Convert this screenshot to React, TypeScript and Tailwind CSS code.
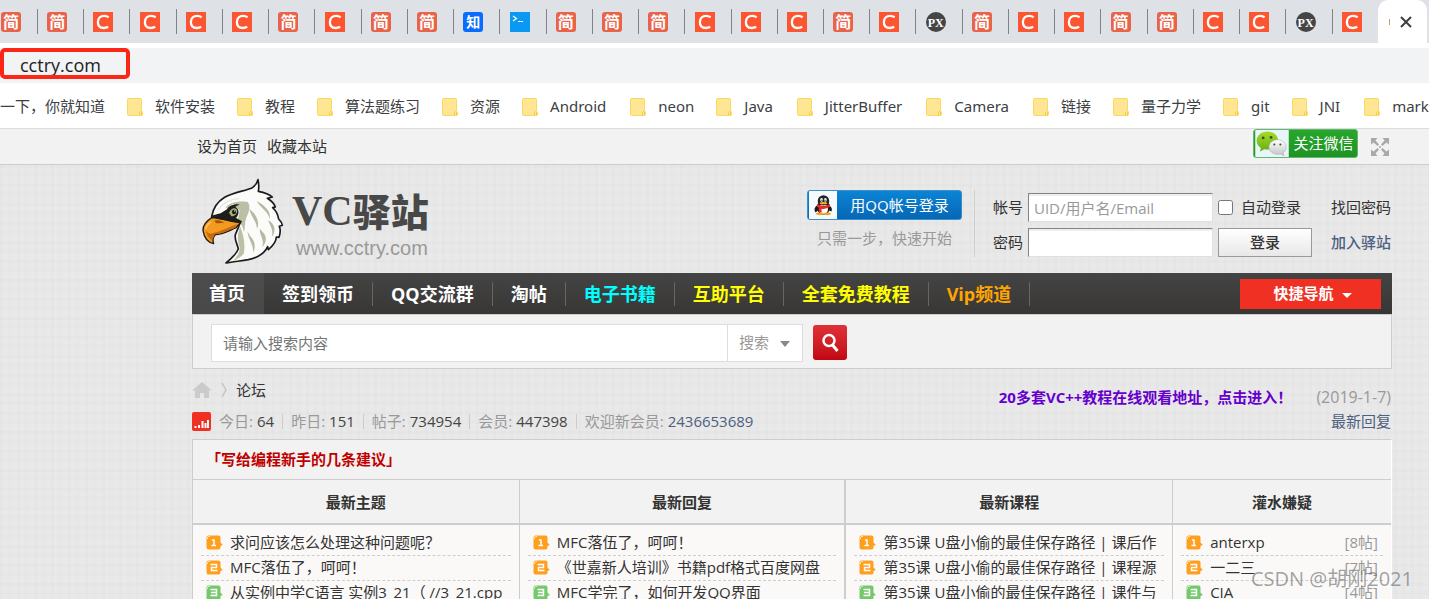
import { useState } from 'react';

const TABS = [
  'jian', 'jian', 'c', 'c', 'c', 'c', 'jian', 'c', 'jian', 'jian',
  'zhi', 'code', 'jian', 'jian', 'jian', 'c', 'c', 'c', 'jian', 'c',
  'px', 'jian', 'c', 'c', 'jian', 'jian', 'c', 'c', 'px', 'c',
];

const BOOKMARKS = [
  '软件安装', '教程', '算法题练习', '资源', 'Android', 'neon', 'Java',
  'JitterBuffer', 'Camera', '链接', '量子力学', 'git', 'JNI', 'mark',
];

const NAV = [
  { label: '签到领币', color: 'text-white' },
  { label: 'QQ交流群', color: 'text-white' },
  { label: '淘帖', color: 'text-white' },
  { label: '电子书籍', color: 'text-[#00ffff]' },
  { label: '互助平台', color: 'text-[#ffff00]' },
  { label: '全套免费教程', color: 'text-[#ffff00]' },
  { label: 'Vip频道', color: 'text-[#ffa500]' },
];

const STATS = [
  { label: '今日', value: '64' },
  { label: '昨日', value: '151' },
  { label: '帖子', value: '734954' },
  { label: '会员', value: '447398' },
];

const COLUMNS = [
  {
    title: '最新主题',
    border: 'border-r',
    rows: [
      { text: '求问应该怎么处理这种问题呢？' },
      { text: 'MFC落伍了，呵呵！' },
      { text: '从实例中学C语言 实例3_21（ //3_21.cpp' },
    ],
  },
  {
    title: '最新回复',
    border: 'border-r-2',
    rows: [
      { text: 'MFC落伍了，呵呵！' },
      { text: '《世嘉新人培训》书籍pdf格式百度网盘' },
      { text: 'MFC学完了，如何开发QQ界面' },
    ],
  },
  {
    title: '最新课程',
    border: 'border-r',
    rows: [
      { text: '第35课 U盘小偷的最佳保存路径 | 课后作' },
      { text: '第35课 U盘小偷的最佳保存路径 | 课程源' },
      { text: '第35课 U盘小偷的最佳保存路径 | 课件与' },
    ],
  },
  {
    title: '灌水嫌疑',
    border: '',
    rows: [
      { text: 'anterxp', count: '[8帖]' },
      { text: '一二三', count: '[7帖]' },
      { text: 'CIA', count: '[4帖]' },
    ],
  },
];

function Favicon({ kind }: { kind: string }) {
  if (kind === 'jian') {
    return (
      <span className="flex size-5 shrink-0 items-center justify-center rounded-[3px] bg-[#e9634a] text-base leading-5 font-bold text-white">
        简
      </span>
    );
  }
  if (kind === 'zhi') {
    return (
      <span className="flex size-5 shrink-0 items-center justify-center rounded-[3px] bg-[#0a6cff] text-sm leading-5 font-bold text-white">
        知
      </span>
    );
  }
  if (kind === 'code') {
    return (
      <svg viewBox="0 0 20 20" className="size-5 shrink-0" aria-hidden="true">
        <rect width="20" height="20" fill="#0a99f2" />
        <path d="M3 4l3.5 2.5L3 9M8 9.5h5" fill="none" stroke="#fff" strokeWidth="1.2" />
      </svg>
    );
  }
  if (kind === 'px') {
    return (
      <span className="flex size-5 shrink-0 items-center justify-center rounded-full bg-[#454545] pt-0.5 font-['Liberation_Serif',serif] text-[12px] leading-4 font-bold text-white">
        PX
      </span>
    );
  }
  return (
    <svg viewBox="0 0 20 20" className="size-5 shrink-0" aria-hidden="true">
      <rect width="20" height="20" fill="#fc5531" />
      <path
        d="M15.6 5.2C14.3 4.3 12.8 3.9 11.2 3.9 7.3 3.9 4.9 6.5 4.9 10.2c0 3.6 2.3 5.8 5.8 5.8 1.7 0 3.2-.4 4.5-1.2"
        fill="none"
        stroke="#fff"
        strokeWidth="2.3"
      />
    </svg>
  );
}

function FolderIcon() {
  return (
    <svg viewBox="0 0 16 18" className="h-[18px] w-4 shrink-0" aria-hidden="true">
      <path d="M1.5.5h12a1 1 0 0 1 1 1v11l1 1.5v2.5a1 1 0 0 1-1 1h-13a1 1 0 0 1-1-1v-15a1 1 0 0 1 1-1z" fill="#ffe694" stroke="#fbd75b" />
      <path d="M12.5 17.5v-3q1-2 2 0v3" fill="#ffe694" stroke="#f3cb4a" />
    </svg>
  );
}

function EagleLogo() {
  return (
    <svg viewBox="48 156 249 261" className="h-[87px] w-[83px] shrink-0" aria-hidden="true">
      <path
        d="M219 161C222 175 222 186 220 196C236 199 252 204 262 213L247 217C260 225 268 234 271 243L263 245C275 256 279 267 281 279C287 285 291 290 292 298L283 301C287 310 286 322 282 334L274 333C274 346 265 358 250 371L248 362C238 384 213 396 190 401C166 405 145 407 123 411C141 396 155 384 160 368C155 350 148 340 151 326L162 300L80 272C84 248 96 228 119 214C147 198 181 195 202 185C211 179 216 171 219 161Z"
        fill="#fbfbf9"
        stroke="#1b1c1b"
        strokeWidth="5"
        strokeLinejoin="round"
      />
      <path d="M120 248C132 229 158 224 188 228C197 238 193 258 185 272C178 290 181 305 177 318C174 301 166 290 158 282L164 254L145 234Z" fill="#bcbfa5" />
      <path d="M165 300C176 329 181 350 177 382C169 392 156 400 144 405C157 392 165 378 164 363C158 349 156 327 165 300Z" fill="#bcc0a8" />
      <path d="M193 248C198 273 216 286 216 309C222 295 221 283 207 262ZM215 225C228 249 250 255 254 279C258 259 245 247 231 235ZM187 316C191 345 207 356 204 381C213 362 210 344 196 331ZM224 308C224 330 240 342 231 363C246 349 246 330 233 318ZM249 282C257 304 266 311 260 333C273 317 269 299 260 290Z" fill="#b4b9a1" />
      <path d="M78 269L107 262L126 250C131 239 147 234 164 235L151 242C163 250 164 263 153 276L171 286L164 300C141 288 112 284 79 279Z" fill="#1c1f1b" />
      <path d="M132 260C139 246 149 243 156 251C158 263 150 270 139 271Z" fill="#a9ab78" />
      <ellipse cx="147" cy="258" rx="6" ry="7" fill="#171a16" />
      <path d="M148 252l4 3-4 2z" fill="#fff" />
      <path
        d="M80 275C68 283 53 297 54 313C57 333 68 349 86 353C82 342 84 333 91 326C111 326 130 315 152 306L166 290C140 289 116 278 80 275Z"
        fill="#f39b20"
        stroke="#281c12"
        strokeWidth="4"
        strokeLinejoin="round"
      />
      <path d="M85 321C106 316 129 305 157 294L147 307C129 314 110 324 90 325L82 342C74 340 66 328 62 314C69 322 76 325 85 321Z" fill="#c66a12" />
      <path d="M88 284C100 280 112 285 119 292C107 289 99 294 93 291Z" fill="#a75409" />
      <path d="M76 289Q64 298 63 307" fill="none" stroke="#ffc25b" strokeWidth="5" strokeLinecap="round" />
      <path d="M100 251C113 232 137 219 163 217" fill="none" stroke="#e4e5dd" strokeWidth="4" />
    </svg>
  );
}

function WechatIcon() {
  return (
    <svg viewBox="0 0 36 29" className="h-full w-9 shrink-0" aria-hidden="true">
      <defs>
        <linearGradient id="bubble" x2="0" y2="1">
          <stop stopColor="#a6dc2b" />
          <stop offset="1" stopColor="#68ad13" />
        </linearGradient>
        <linearGradient id="pale" x2="0" y2="1">
          <stop stopColor="#fff" />
          <stop offset="1" stopColor="#bfc3c5" />
        </linearGradient>
      </defs>
      <rect width="36" height="29" fill="#e8f5f9" />
      <path d="M13 1.5C6.5 1.5 1.5 6 1.5 11.5c0 3.2 1.7 6 4.5 7.8L5 23l4.8-2.3C16.5 22.2 24.5 18.5 24.5 11c0-5.500-5-9.500-11.500-9.500z" fill="url(#bubble)" />
      <path d="M24 10.5c-5.200 0-9.300 3.300-9.300 7.700s4.100 8 9.300 8c1 0 2-.2 3-.5l4 2-1-3.300c1.900-1.400 3.200-3.600 3.200-6.200 0-4.400-4-7.700-9.200-7.700z" fill="url(#pale)" stroke="#a9b0b2" strokeWidth=".6" />
      <g fill="#3b531d">
        <circle cx="8.5" cy="8.5" r="1.5" />
        <circle cx="17" cy="8" r="1.5" />
        <circle cx="20.5" cy="15.5" r="1.1" />
        <circle cx="27" cy="15.5" r="1.1" />
      </g>
    </svg>
  );
}

function PenguinIcon() {
  return (
    <svg viewBox="0 0 30 30" className="h-full w-[30px] shrink-0" aria-hidden="true">
      <rect width="30" height="30" fill="#f5fafd" />
      <path d="M9 15Q4 19 7 23L12 19zM21 15Q26 18 24 22L18 19z" fill="#17191b" />
      <ellipse cx="15.5" cy="18" rx="7" ry="7.5" fill="#17191b" />
      <ellipse cx="15.5" cy="19.5" rx="4.8" ry="5.5" fill="#fff" />
      <path d="M9.5 13V10a6 5.5 0 0 1 12 0v3q-6 5-12 0z" fill="#222426" />
      <ellipse cx="13.5" cy="9.5" rx="1.5" ry="2" fill="#fff" />
      <ellipse cx="17.5" cy="9.5" rx="1.5" ry="2" fill="#fff" />
      <circle cx="13.9" cy="9.8" r=".7" />
      <circle cx="17.1" cy="9.8" r=".7" />
      <ellipse cx="15.5" cy="13" rx="4" ry="1.3" fill="#f5ad21" />
      <path d="M8.5 14q7 4 14 0v3q-5 3-9 2v4h-3v-5l-2-1z" fill="#e52b24" />
      <ellipse cx="11.5" cy="24.5" rx="4" ry="1.5" fill="#f2a31f" />
      <ellipse cx="19.5" cy="24.5" rx="4" ry="1.5" fill="#f2a31f" />
    </svg>
  );
}

function RankBadge({ rank }: { rank: number }) {
  const color = rank < 3 ? '#ff9f1e' : '#75c96c';
  return (
    <svg viewBox="0 0 17 15" className="h-[15px] w-[17px] shrink-0" aria-hidden="true">
      <path d="M2.5.5h10a2 2 0 0 1 2 2v5l2.3 2.5-2.3 1v1.5a2 2 0 0 1-2 2h-10a2 2 0 0 1-2-2v-10a2 2 0 0 1 2-2z" fill={color} />
      <path d="M1.5 4V2.5a1 1 0 0 1 1-1H4" fill="none" stroke="#fff" strokeOpacity=".7" />
      {rank === 1 && <path d="M6 5h2v5.5M5.5 10.5h4.5" fill="none" stroke="#fff" strokeWidth="1.5" />}
      {rank === 2 && <path d="M4.5 4.5h6v3h-5v3h6" fill="none" stroke="#fff" strokeWidth="1.5" />}
      {rank === 3 && <path d="M4.5 4.5h6v6h-6M5 7.5h5" fill="none" stroke="#fff" strokeWidth="1.5" />}
    </svg>
  );
}

function Browser() {
  return (
    <header className="shrink-0 border-b border-[#dadce0] bg-white text-[#3c4043]">
      <div className="flex h-[43px] bg-[#dee1e6] pl-px">
        <ul className="flex min-w-0 flex-1 items-center">
          {TABS.map((kind, i) => (
            <li
              key={i}
              className="flex min-w-0 flex-1 items-center gap-4 last:w-9 last:flex-none"
            >
              <Favicon kind={kind} />
              {i < TABS.length - 1 && <span className="h-[25px] w-px shrink-0 bg-[#808387]" />}
            </li>
          ))}
        </ul>
        <div className="flex w-[49px] items-center justify-end rounded-t-[10px] bg-white pr-[15px]">
          <span className="mr-2.5 h-1.5 w-px bg-[#d79a5c]" />
          <button type="button" aria-label="关闭标签页">
            <svg viewBox="0 0 12 12" className="size-3" aria-hidden="true">
              <path d="M1 1l10 10M11 1L1 11" stroke="#3c4043" strokeWidth="2" />
            </svg>
          </button>
        </div>
        <div className="w-0.5" />
      </div>
      <div className="mt-[5px] h-[35px] bg-[#f1f3f4]">
        <input
          type="text"
          aria-label="地址"
          defaultValue="cctry.com"
          className="block h-[31px] w-[130px] rounded-[5px] border-4 border-[#fb2616] px-4 pt-0.5 text-[18px] text-[#202124] outline-none"
        />
      </div>
      <nav className="flex h-[45px] items-center gap-[22px] overflow-hidden pt-0.5 font-['Noto_Sans','Noto_Sans_CJK_SC',sans-serif] text-[15px] whitespace-nowrap">
        <a href="#home">一下，你就知道</a>
        {BOOKMARKS.map((name) => (
          <a
            key={name}
            href="#bookmark"
            className={`flex shrink-0 items-center gap-3 ${/^[A-Z]/.test(name) ? 'pr-0.5' : ''}`}
          >
            <FolderIcon />
            {name}
          </a>
        ))}
      </nav>
    </header>
  );
}

function LoginForm() {
  const [account, setAccount] = useState('');
  const [password, setPassword] = useState('');
  const field =
    'h-[29px] w-[185px] border border-t-[#848484] border-r-[#e0e0e0] border-b-[#e0e0e0] border-l-[#848484] bg-white px-[5px] shadow-[inset_0_2px_0_#eeeeee] outline-none placeholder:text-[#999]';

  return (
    <div className="flex pt-[25px] pr-px">
      <div className="flex w-[155px] flex-col items-center">
        <button
          type="button"
          className="flex h-[30px] w-full overflow-hidden rounded-[3px] border border-[#3d8fc9] bg-linear-to-b from-[#0b84d4] to-[#0667b5] text-white"
        >
          <PenguinIcon />
          <span className="flex-1 text-center leading-7">用QQ帐号登录</span>
        </button>
        <p className="mt-[7px] leading-[22px] text-[#999]">只需一步，快速开始</p>
      </div>
      <form
        className="ml-3 grid h-[67px] grid-cols-[35px_185px_94px_auto] items-center gap-y-1.5 border-l border-[#cdcdcd] pt-[3px] pl-[18px]"
        onSubmit={(e) => e.preventDefault()}
      >
        <label htmlFor="account">帐号</label>
        <input
          id="account"
          type="text"
          placeholder="UID/用户名/Email"
          value={account}
          onChange={(e) => setAccount(e.target.value)}
          className={field}
        />
        <label className="ml-[5px] flex items-center gap-2 whitespace-nowrap">
          <input type="checkbox" className="size-[15px]" />
          自动登录
        </label>
        <a href="#lost" className="ml-6">找回密码</a>
        <label htmlFor="password">密码</label>
        <input
          id="password"
          type="password"
          value={password}
          onChange={(e) => setPassword(e.target.value)}
          className={field}
        />
        <button
          type="submit"
          className="ml-[5px] h-[29px] w-[94px] border border-[#999] bg-linear-to-b from-white to-[#e8e8e8] font-medium"
        >
          登录
        </button>
        <a href="#join" className="ml-6 font-medium text-[#4d6080]">加入驿站</a>
      </form>
    </div>
  );
}

function SearchBar() {
  return (
    <form
      className="flex h-[55px] items-center border border-[#cdcdcd] bg-[#f2f2f2] px-[18px] pt-0.5"
      onSubmit={(e) => e.preventDefault()}
    >
      <input
        type="search"
        aria-label="搜索内容"
        placeholder="请输入搜索内容"
        className="h-[38px] w-[517px] border border-[#ddd] bg-white px-[11px] outline-none placeholder:text-[#757575]"
      />
      <div className="relative">
        <select
          aria-label="搜索范围"
          className="h-[38px] w-[75px] appearance-none border border-l-0 border-[#ddd] bg-white pl-[11px] text-[#999]"
        >
          <option>搜索</option>
        </select>
        <svg viewBox="0 0 10 6" className="pointer-events-none absolute top-[17px] right-[13px] h-1.5 w-2.5" aria-hidden="true">
          <path d="M0 0h10L5 6z" fill="#888" />
        </svg>
      </div>
      <button
        type="submit"
        aria-label="搜索"
        className="ml-2.5 flex h-[35px] w-[34px] items-center justify-center rounded-[3px] bg-linear-to-b from-[#e03038] to-[#c20413]"
      >
        <svg viewBox="0 0 18 20" className="h-5 w-[18px]" aria-hidden="true">
          <circle cx="8" cy="7.5" r="5.5" fill="none" stroke="#fff" strokeWidth="2.5" />
          <path d="M11.5 12l5 6" stroke="#fff" strokeWidth="3" />
        </svg>
      </button>
    </form>
  );
}

function InfoBar() {
  return (
    <div className="flex h-[70px] justify-between">
      <div className="pt-2.5">
        <div className="flex h-[22px] items-center">
          <svg viewBox="0 0 20 16" className="h-4 w-5" aria-hidden="true">
            <path d="M10 0l10 8.5h-3V16h-5v-5H8v5H3V8.5H0z" fill="#cbcbcb" />
          </svg>
          <svg viewBox="0 0 8 14" className="mx-2 h-3.5 w-2" aria-hidden="true">
            <path d="M2 0l4 7-4 7" fill="none" stroke="#c4c4c4" strokeWidth="1.5" />
          </svg>
          <a href="#forum">论坛</a>
        </div>
        <div className="mt-[9px] flex h-[22px] items-center">
          <svg viewBox="0 0 19 19" className="mr-2 size-[19px]" aria-hidden="true">
            <rect width="19" height="19" rx="2" fill="#f03023" />
            <path d="M3.5 16v-2M7 16v-3M10.5 16V9M13.5 16v-5M16 16V8" stroke="#fff" strokeWidth="2" />
          </svg>
          {STATS.map((s) => (
            <span key={s.label} className="flex items-center text-[#999]">
              {s.label}:<em className="ml-1 text-[#444] not-italic">{s.value}</em>
              <span className="mr-2 ml-2 h-[15px] w-px bg-[#ccc]" />
            </span>
          ))}
          <span className="text-[#999]">欢迎新会员:</span>
          <a href="#member" className="ml-1 text-[#4d6080]">2436653689</a>
        </div>
      </div>
      <div className="flex flex-col items-end pt-4 pr-px leading-6">
        <p className="flex">
          <a href="#vc" className="font-bold text-[#6600cc]">20多套VC++教程在线观看地址，点击进入！</a>
          <span className="ml-6 text-base text-[#999]">(2019-1-7)</span>
        </p>
        <a href="#latest" className="text-[#4d6080]">最新回复</a>
      </div>
    </div>
  );
}

function Forum() {
  return (
    <section className="border border-[#cdcdcd] border-r-white bg-[#f2f2f2]">
      <h2 className="h-10 border-b border-[#cdcdcd] pl-[13px] leading-[39px] font-bold text-[#c00000]">
        「写给编程新手的几条建议」
      </h2>
      <div className="grid grid-cols-[3fr_3fr_3fr_2fr]">
        {COLUMNS.map((col) => (
          <section key={col.title} className={`min-w-0 border-[#cdcdcd] ${col.border}`}>
            <h3 className="h-[45px] border-b-2 border-[#cdcdcd] text-center leading-[44px] font-bold">
              {col.title}
            </h3>
            <ol className="bg-[#faf9f8] px-2 pt-1.5 pb-3">
              {col.rows.map((row, i) => (
                <li
                  key={row.text}
                  className="flex h-[25px] items-center border-b border-dashed border-[#cdcdcd] pr-[5px] pb-0.5 pl-[5px]"
                >
                  <RankBadge rank={i + 1} />
                  <a href="#thread" className="ml-[7px] min-w-0 flex-1 overflow-hidden whitespace-nowrap">
                    {row.text}
                  </a>
                  {row.count && <span className="text-[#999]">{row.count}</span>}
                </li>
              ))}
            </ol>
          </section>
        ))}
      </div>
    </section>
  );
}

function App() {
  return (
    <div className="relative flex h-screen flex-col overflow-hidden bg-[#e9e9e9] font-['Open_Sans','Noto_Sans_CJK_SC',sans-serif] text-[15px] text-[#333]">
      <Browser />
      <div className="flex h-9 shrink-0 justify-between border-b border-[#cdcdcd] bg-[#f2f2f2] pr-[39px] pl-[197px]">
        <div className="flex items-center gap-2.5">
          <a href="#sethome">设为首页</a>
          <a href="#favorite">收藏本站</a>
        </div>
        <div className="flex items-start gap-3">
          <button
            type="button"
            className="flex h-[29px] w-[105px] overflow-hidden rounded-[3px] border border-[#63b76e] bg-linear-to-b from-[#28a72c] to-[#1e9325] text-white"
          >
            <WechatIcon />
            <span className="flex-1 text-center leading-[27px]">关注微信</span>
          </button>
          <button type="button" aria-label="切换到宽版" className="mt-2">
            <svg viewBox="0 0 20 20" className="size-5" aria-hidden="true">
              <path d="M1 1h6.500L5.500 3.500 9 7.500 7.500 9 3.500 5.500 1 7.500zM19 1v6.500L16.500 5.500 12.500 9 11 7.500l3.500-4L12.500 1zM1 19v-6.500L3.500 14.500 7.500 11 9 12.500l-3.500 4L7.500 19zM19 19h-6.500l2-2.500-3.500-4 1.500-1.500 4 3.500 2.500-2z" fill="#a9a9a9" />
              <circle cx="10" cy="10" r="1" fill="#a9a9a9" />
            </svg>
          </button>
        </div>
      </div>

      <div className="flex-1 bg-[repeating-linear-gradient(90deg,#00000003_0_3px,transparent_3px_7px,#00000002_7px_12px,transparent_12px_17px),repeating-linear-gradient(#00000003_0_3px,transparent_3px_8px,#00000002_8px_12px,transparent_12px_19px)] pr-[37px] pl-48">
        <div className="flex h-[108px] justify-between">
          <a href="#logo" className="flex pt-[13px] pl-[9px]">
            <EagleLogo />
            <span className="ml-2 flex flex-col pt-3">
              <span className="flex items-center text-[38px] leading-[42px] font-black text-[#484848]">
                <span className="font-['Liberation_Serif',serif] text-[42px]">VC</span>驿站
              </span>
              <span className="ml-1 font-['Liberation_Sans',sans-serif] text-[20px] leading-8 text-[#999]">
                www.cctry.com
              </span>
            </span>
          </a>
          <LoginForm />
        </div>

        <nav className="flex h-[41px] items-center bg-linear-to-b from-[#444] to-[#383735] pr-[11px] text-[18px] font-bold">
          <a href="#index" className="h-full w-[72px] bg-linear-to-b from-[#4d4d4d] to-[#484848] pr-0.5 text-center leading-[41px] text-white">
            首页
          </a>
          {NAV.map((item) => (
            <a
              key={item.label}
              href="#nav"
              className={`border-r border-[#666] px-[18px] leading-6 whitespace-nowrap ${item.color}`}
            >
              {item.label}
            </a>
          ))}
          <button
            type="button"
            className="ml-auto flex h-[30px] w-[141px] items-center justify-center gap-2 bg-[#f03023] pl-1 text-[15px] text-white"
          >
            快捷导航
            <svg viewBox="0 0 10 5" className="mt-1 h-[5px] w-2.5" aria-hidden="true">
              <path d="M0 0h10L5 5z" fill="#fff" />
            </svg>
          </button>
        </nav>

        <SearchBar />
        <InfoBar />
        <Forum />
      </div>

      <p className="absolute right-4 bottom-1.5 text-[20px] leading-7 text-[#66666699]">
        CSDN @胡刚2021
      </p>
    </div>
  );
}

export default App;
